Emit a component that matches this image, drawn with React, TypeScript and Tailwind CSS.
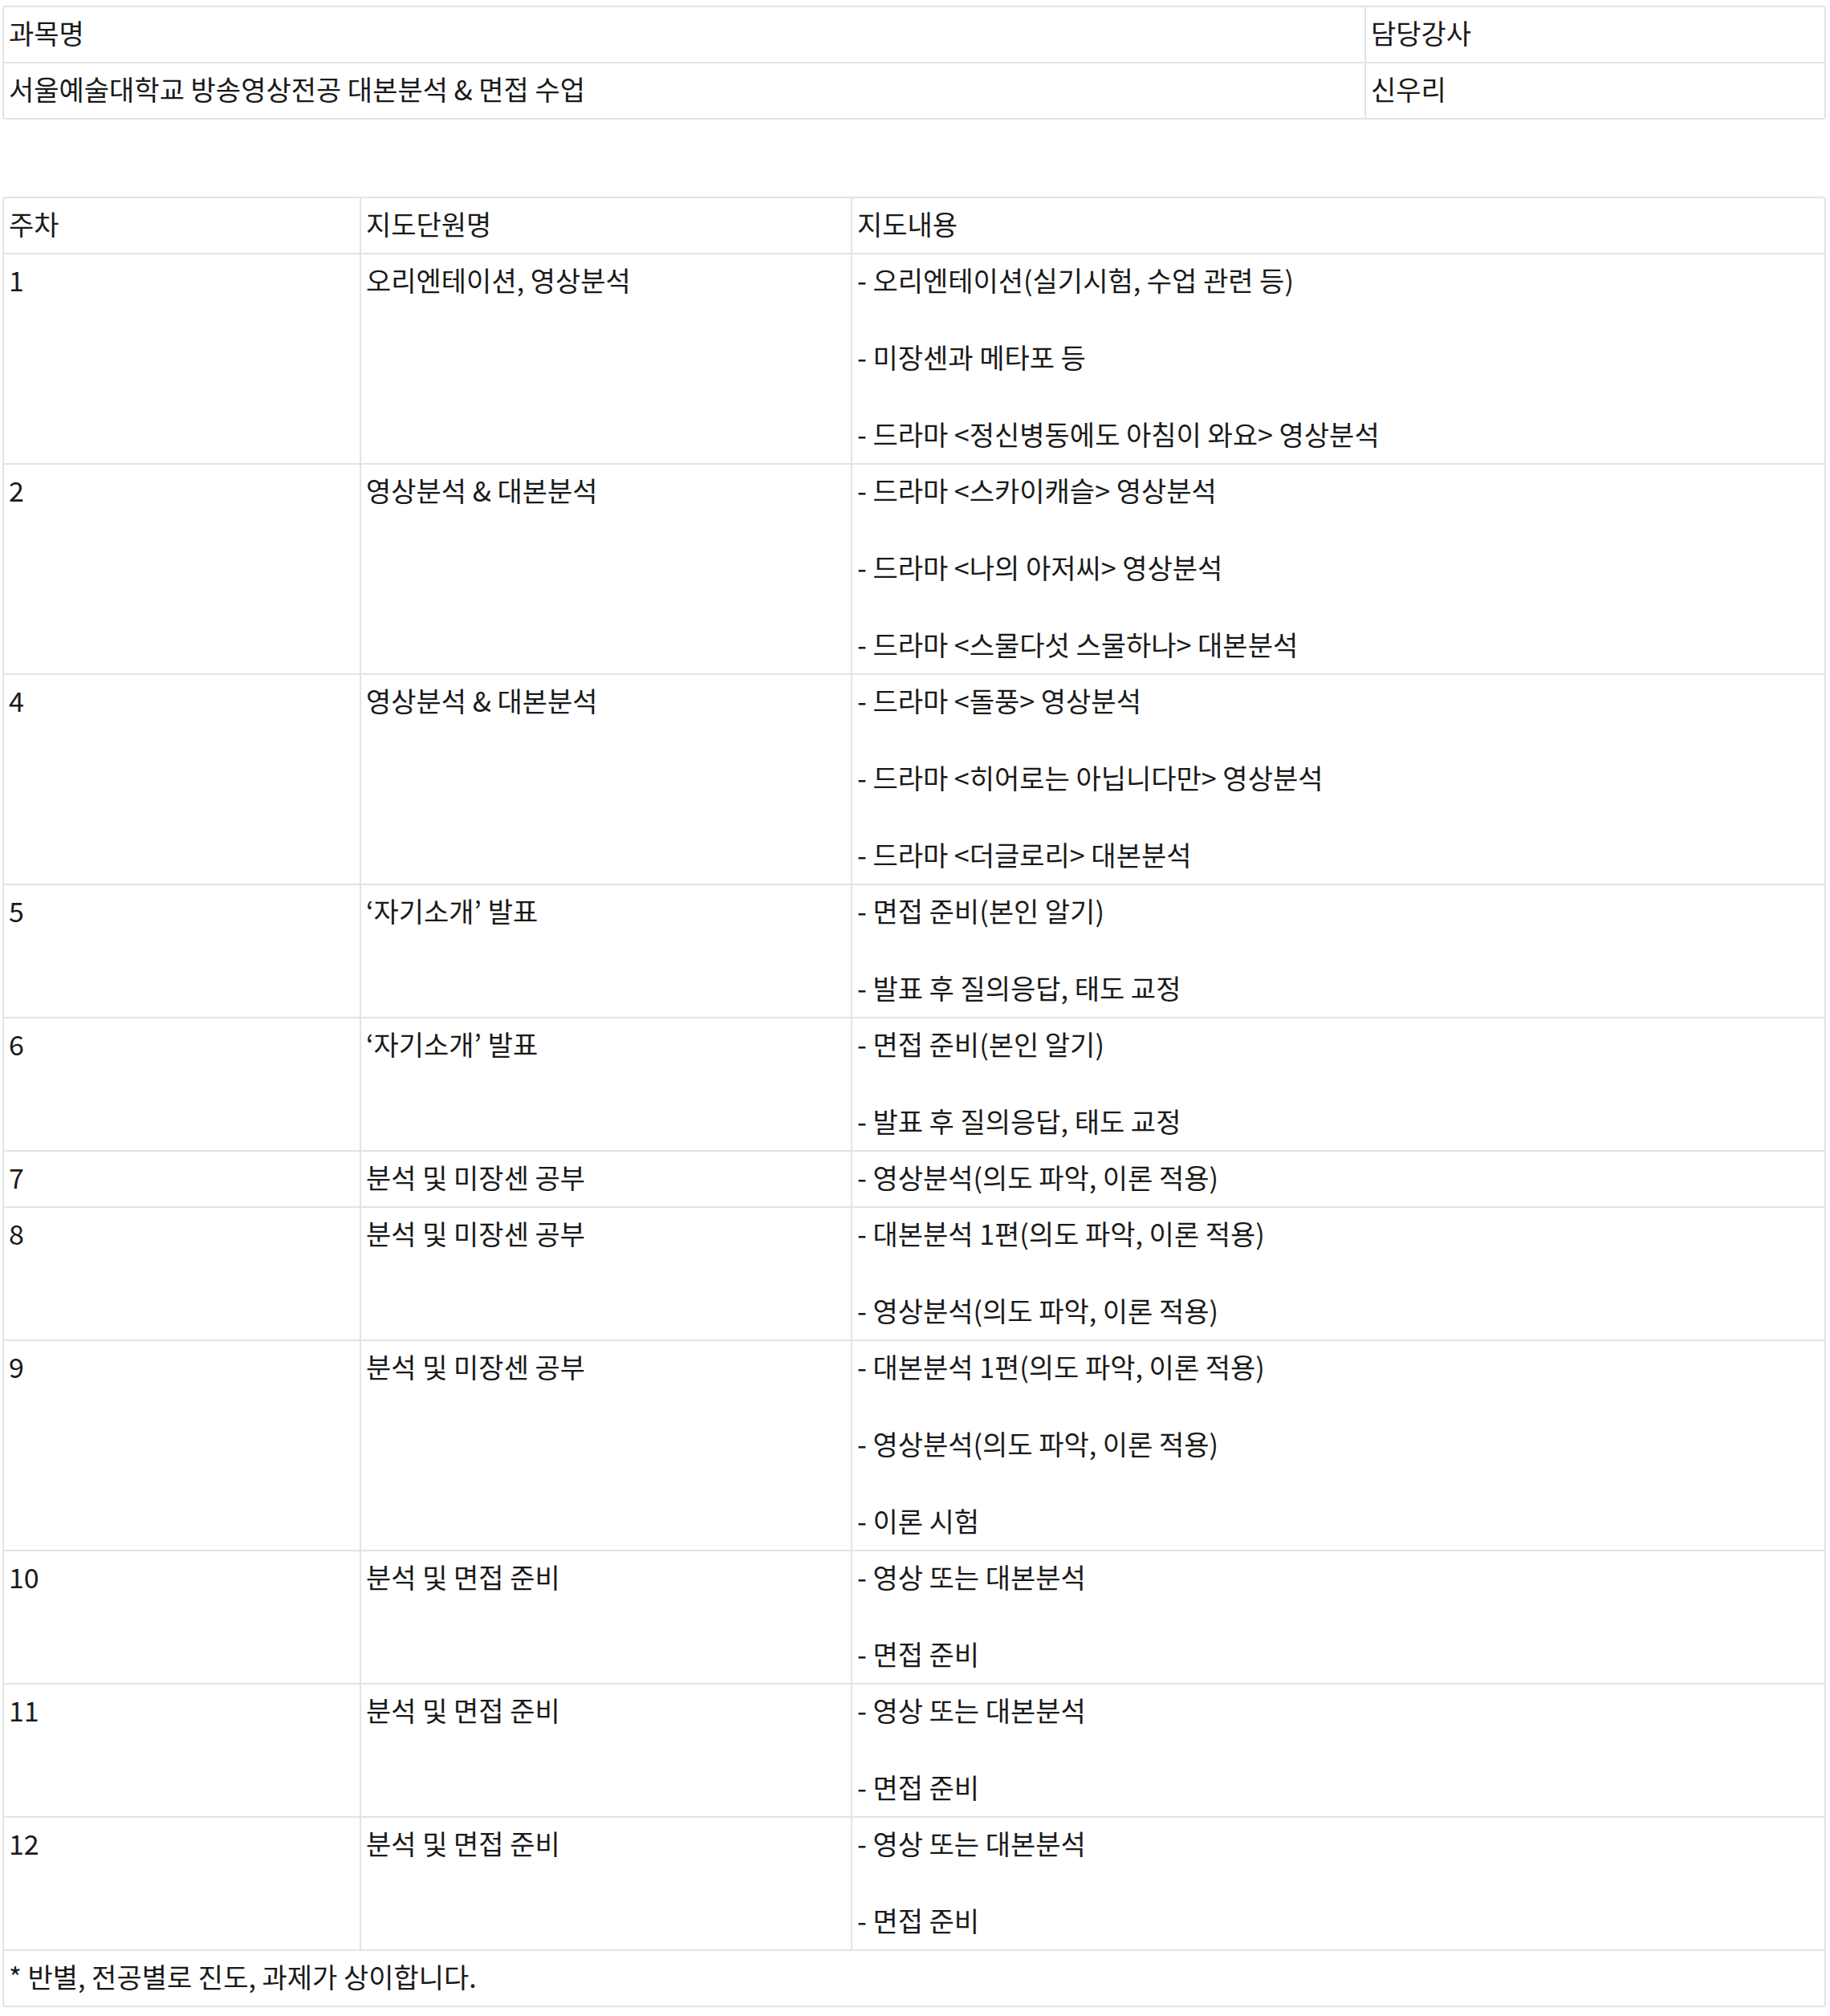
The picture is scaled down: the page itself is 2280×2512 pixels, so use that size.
const info = [
  { label: "과목명", value: "서울예술대학교 방송영상전공 대본분석 & 면접 수업" },
];

const weeks = [
  {
    week: "1",
    unit: "오리엔테이션, 영상분석",
    items: [
      "- 오리엔테이션(실기시험, 수업 관련 등)",
      "- 미장센과 메타포 등",
      "- 드라마 <정신병동에도 아침이 와요> 영상분석",
    ],
  },
  {
    week: "2",
    unit: "영상분석 & 대본분석",
    items: [
      "- 드라마 <스카이캐슬> 영상분석",
      "- 드라마 <나의 아저씨> 영상분석",
      "- 드라마 <스물다섯 스물하나> 대본분석",
    ],
  },
  {
    week: "4",
    unit: "영상분석 & 대본분석",
    items: [
      "- 드라마 <돌풍> 영상분석",
      "- 드라마 <히어로는 아닙니다만> 영상분석",
      "- 드라마 <더글로리> 대본분석",
    ],
  },
  {
    week: "5",
    unit: "‘자기소개’ 발표",
    items: ["- 면접 준비(본인 알기)", "- 발표 후 질의응답, 태도 교정"],
  },
  {
    week: "6",
    unit: "‘자기소개’ 발표",
    items: ["- 면접 준비(본인 알기)", "- 발표 후 질의응답, 태도 교정"],
  },
  {
    week: "7",
    unit: "분석 및 미장센 공부",
    items: ["- 영상분석(의도 파악, 이론 적용)"],
  },
  {
    week: "8",
    unit: "분석 및 미장센 공부",
    items: ["- 대본분석 1편(의도 파악, 이론 적용)", "- 영상분석(의도 파악, 이론 적용)"],
  },
  {
    week: "9",
    unit: "분석 및 미장센 공부",
    items: [
      "- 대본분석 1편(의도 파악, 이론 적용)",
      "- 영상분석(의도 파악, 이론 적용)",
      "- 이론 시험",
    ],
  },
  {
    week: "10",
    unit: "분석 및 면접 준비",
    items: ["- 영상 또는 대본분석", "- 면접 준비"],
  },
  {
    week: "11",
    unit: "분석 및 면접 준비",
    items: ["- 영상 또는 대본분석", "- 면접 준비"],
  },
  {
    week: "12",
    unit: "분석 및 면접 준비",
    items: ["- 영상 또는 대본분석", "- 면접 준비"],
  },
];

const cell = "px-[6px] pt-[8px] pb-[12px] leading-[48px] whitespace-nowrap";

const App = () => {
  return (
    <div className="min-h-screen bg-white pt-[7px] pl-[3px] pr-[5px] text-[34px] text-[#1a1a1a] font-['Noto_Sans_CJK_KR','Noto_Sans',sans-serif]">
      {/* 과목 정보 */}
      <div className="border-2 border-[#e3e3e3] rounded-[4px]">
        <div className="grid grid-cols-[1697px_1fr] border-b-2 border-[#e3e3e3]">
          <div className={`${cell} border-r-2 border-[#e3e3e3]`}>과목명</div>
          <div className={cell}>담당강사</div>
        </div>
        {info.map((row, i) => (
          <div key={i} className="grid grid-cols-[1697px_1fr]">
            <div className={`${cell} border-r-2 border-[#e3e3e3]`}>{row.value}</div>
            <div className={cell}>신우리</div>
          </div>
        ))}
      </div>

      {/* 주차별 계획 */}
      <div className="mt-[96px] border-2 border-[#e3e3e3] rounded-[4px]">
        <div className="grid grid-cols-[445px_612px_1fr] border-b-2 border-[#e3e3e3]">
          <div className={`${cell} border-r-2 border-[#e3e3e3]`}>주차</div>
          <div className={`${cell} border-r-2 border-[#e3e3e3]`}>지도단원명</div>
          <div className={cell}>지도내용</div>
        </div>
        {weeks.map((w) => (
          <div
            key={w.week}
            className="grid grid-cols-[445px_612px_1fr] border-b-2 border-[#e3e3e3]"
          >
            <div className={`${cell} border-r-2 border-[#e3e3e3]`}>{w.week}</div>
            <div className={`${cell} border-r-2 border-[#e3e3e3]`}>{w.unit}</div>
            <div className={`${cell} flex flex-col gap-[48px]`}>
              {w.items.map((item, i) => (
                <p key={i}>{item}</p>
              ))}
            </div>
          </div>
        ))}
        <div className={cell}>* 반별, 전공별로 진도, 과제가 상이합니다.</div>
      </div>
    </div>
  );
};

export default App;
